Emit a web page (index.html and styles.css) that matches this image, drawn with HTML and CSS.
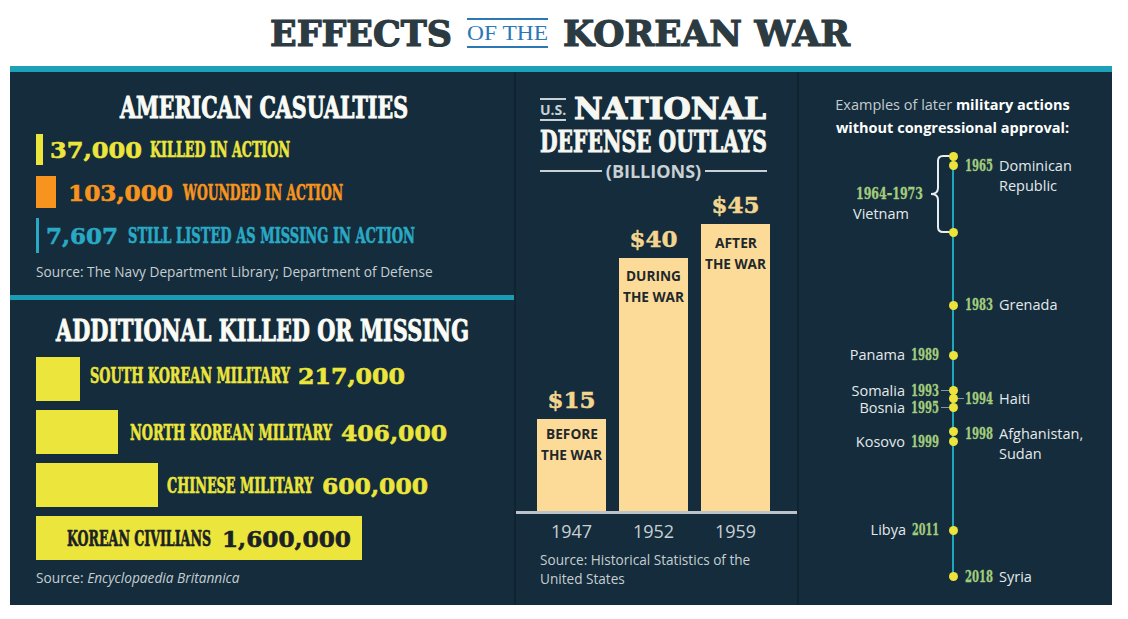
FILE: index.html
```html
<!DOCTYPE html>
<html lang="en">
<head>
<meta charset="utf-8">
<title>Effects of the Korean War</title>
<link rel="stylesheet" href="styles.css">
</head>
<body>
<header class="masthead">
  <h1 class="title">
    <span class="fit" data-w="182"><span>EFFECTS</span></span>
    <span class="fit of-the" data-w="81"><span>OF THE</span></span>
    <span class="fit" data-w="287"><span>KOREAN WAR</span></span>
  </h1>
</header>

<main class="panel">
  <section class="col col-left">
    <div class="casualties">
      <h2 class="sec-title sec-title-1"><span class="fit" data-w="288"><span>AMERICAN CASUALTIES</span></span></h2>
      <div class="stats">
        <div class="stat stat-killed">
          <i class="mark"></i>
          <span class="fit num" data-w="92"><span>37,000</span></span>
          <span class="fit lbl" data-w="140"><span>KILLED IN ACTION</span></span>
        </div>
        <div class="stat stat-wounded">
          <i class="mark"></i>
          <span class="fit num" data-w="105"><span>103,000</span></span>
          <span class="fit lbl" data-w="160"><span>WOUNDED IN ACTION</span></span>
        </div>
        <div class="stat stat-missing">
          <i class="mark"></i>
          <span class="fit num" data-w="72"><span>7,607</span></span>
          <span class="fit lbl" data-w="287"><span>STILL LISTED AS MISSING IN ACTION</span></span>
        </div>
      </div>
      <p class="source source-1">Source: The Navy Department Library; Department of Defense</p>
    </div>

    <div class="additional">
      <h2 class="sec-title sec-title-2"><span class="fit" data-w="413"><span>ADDITIONAL KILLED OR MISSING</span></span></h2>
      <div class="kills">
        <div class="kill-row kill-row-1">
          <i class="kbar kbar-1"></i>
          <span class="fit lbl" data-w="200"><span>SOUTH KOREAN MILITARY</span></span>
          <span class="fit num" data-w="107"><span>217,000</span></span>
        </div>
        <div class="kill-row kill-row-2">
          <i class="kbar kbar-2"></i>
          <span class="fit lbl" data-w="202"><span>NORTH KOREAN MILITARY</span></span>
          <span class="fit num" data-w="106"><span>406,000</span></span>
        </div>
        <div class="kill-row kill-row-3">
          <i class="kbar kbar-3"></i>
          <span class="fit lbl" data-w="146"><span>CHINESE MILITARY</span></span>
          <span class="fit num" data-w="106"><span>600,000</span></span>
        </div>
        <div class="kill-row kill-row-4">
          <div class="kbar kbar-4">
            <span class="fit lbl" data-w="144"><span>KOREAN CIVILIANS</span></span>
            <span class="fit num" data-w="129"><span>1,600,000</span></span>
          </div>
        </div>
      </div>
      <p class="source source-2">Source: <em>Encyclopaedia Britannica</em></p>
    </div>
  </section>

  <section class="col col-mid">
    <div class="outlays-head">
      <div class="mhead-row">
        <span class="us">U.S.</span>
        <span class="fit big-slab" data-w="192"><span>NATIONAL</span></span>
      </div>
      <div class="mhead-2"><span class="fit cond-slab" data-w="227"><span>DEFENSE OUTLAYS</span></span></div>
      <div class="billions">(BILLIONS)</div>
    </div>

    <div class="chart">
      <div class="bar-col">
        <span class="val">$15</span>
        <div class="bar bar-1947">
          <span class="fit" data-w="52"><span>BEFORE</span></span>
          <span class="fit" data-w="61"><span>THE WAR</span></span>
        </div>
      </div>
      <div class="bar-col">
        <span class="val">$40</span>
        <div class="bar bar-1952">
          <span class="fit" data-w="55"><span>DURING</span></span>
          <span class="fit" data-w="61"><span>THE WAR</span></span>
        </div>
      </div>
      <div class="bar-col">
        <span class="val">$45</span>
        <div class="bar bar-1959">
          <span class="fit" data-w="42"><span>AFTER</span></span>
          <span class="fit" data-w="61"><span>THE WAR</span></span>
        </div>
      </div>
    </div>
    <div class="years">
      <span>1947</span><span>1952</span><span>1959</span>
    </div>
    <p class="source source-3">Source: Historical Statistics of the<br>United States</p>
  </section>

  <section class="col col-right">
    <p class="actions-head">Examples of later <b>military actions<br>without congressional approval:</b></p>
    <div class="timeline">
      <i class="tl-line"></i>
      <svg class="brace" width="26" height="80" viewBox="0 0 26 80" aria-hidden="true">
        <path d="M25 2 H15 Q10 2 10 7 V34 Q10 40 3 40 Q10 40 10 46 V73 Q10 78 15 78 H25" fill="none" stroke="#e9edef" stroke-width="2"/>
      </svg>
      <i class="tl-conn conn-somalia"></i>
      <i class="tl-conn conn-bosnia"></i>
      <i class="tl-conn conn-haiti"></i>

      <i class="dot d-1964"></i>
      <i class="dot d-1965"></i>
      <i class="dot d-1973"></i>
      <i class="dot d-1983"></i>
      <i class="dot d-1989"></i>
      <i class="dot d-1993"></i>
      <i class="dot d-1994"></i>
      <i class="dot d-1995"></i>
      <i class="dot d-1998"></i>
      <i class="dot d-1999"></i>
      <i class="dot d-2011"></i>
      <i class="dot d-2018"></i>

      <div class="tl-item tl-r t-1965"><span class="fit yr" data-w="28"><span>1965</span></span><span class="place">Dominican<br>Republic</span></div>
      <div class="tl-item tl-viet"><span class="fit yr yr-viet" data-w="67"><span>1964–1973</span></span><span class="place">Vietnam</span></div>
      <div class="tl-item tl-r t-1983"><span class="fit yr" data-w="28"><span>1983</span></span><span class="place">Grenada</span></div>
      <div class="tl-item tl-l t-1989"><span class="place">Panama</span><span class="fit yr" data-w="28"><span>1989</span></span></div>
      <div class="tl-item tl-l t-1993"><span class="place">Somalia</span><span class="fit yr" data-w="28"><span>1993</span></span></div>
      <div class="tl-item tl-r t-1994"><span class="fit yr" data-w="28"><span>1994</span></span><span class="place">Haiti</span></div>
      <div class="tl-item tl-l t-1995"><span class="place">Bosnia</span><span class="fit yr" data-w="28"><span>1995</span></span></div>
      <div class="tl-item tl-r t-1998"><span class="fit yr" data-w="28"><span>1998</span></span><span class="place">Afghanistan,<br>Sudan</span></div>
      <div class="tl-item tl-l t-1999"><span class="place">Kosovo</span><span class="fit yr" data-w="28"><span>1999</span></span></div>
      <div class="tl-item tl-l t-2011"><span class="place">Libya</span><span class="fit yr" data-w="27"><span>2011</span></span></div>
      <div class="tl-item tl-r t-2018"><span class="fit yr" data-w="28"><span>2018</span></span><span class="place">Syria</span></div>
    </div>
  </section>
</main>
<script src="fit.js"></script>
</body>
</html>
```

FILE: styles.css
```css
* { box-sizing: border-box; }
html, body { margin: 0; padding: 0; background: #ffffff; }
body {
  width: 1128px;
  height: 619px;
  overflow: hidden;
  font-family: "Open Sans", "Noto Sans", sans-serif;
}

/* fit-to-width helper: outer box has target width, inner is scaled horizontally */
.fit { display: inline-block; flex: none; white-space: nowrap; }
.fit > span { display: inline-block; transform-origin: 0 50%; }

/* ---------- masthead ---------- */
.masthead {
  height: 66px;
  display: flex;
  justify-content: center;
  align-items: center;
  padding-right: 8px;
}
.title {
  margin: 0;
  display: flex;
  align-items: center;
  gap: 15px;
  font-family: "DejaVu Serif", serif;
  font-weight: bold;
  font-size: 36px;
  line-height: 1;
  color: #2c3a41;
  -webkit-text-stroke: 1.2px #2c3a41;
}
.of-the {
  font-family: "Liberation Serif", serif;
  font-weight: normal;
  font-size: 21px;
  line-height: 1;
  color: #2b78b5;
  -webkit-text-stroke: 0;
  border-top: 2px solid #2b78b5;
  border-bottom: 2px solid #2b78b5;
  padding: 3px 0 2px;
}

/* ---------- panel ---------- */
.panel {
  margin-left: 10px;
  width: 1102px;
  height: 539px;
  background: #142c3b;
  border-top: 6px solid #1ca2b8;
  display: grid;
  grid-template-columns: 504px 283px 315px;
}
.col-mid, .col-right { border-left: 2px solid #0f2330; }

.sec-title {
  margin: 0;
  text-align: center;
  font-family: "DejaVu Serif Condensed", "DejaVu Serif", serif;
  font-weight: bold;
  line-height: 1;
  color: #fbfbf6;
  -webkit-text-stroke: 0.9px #fbfbf6;
}
.num {
  font-family: "DejaVu Serif", serif;
  font-weight: bold;
  font-size: 23px;
  line-height: 1;
  -webkit-text-stroke: 0.6px currentColor;
}
.lbl {
  font-family: "DejaVu Serif Condensed", "DejaVu Serif", serif;
  font-weight: bold;
  font-size: 22px;
  line-height: 1;
  -webkit-text-stroke: 0.6px currentColor;
}
.source {
  margin: 0;
  font-size: 13.7px;
  line-height: 18px;
  color: #c6ced2;
}

/* ---------- american casualties ---------- */
.casualties { height: 223px; padding-top: 22px; }
.sec-title-1 { font-size: 29px; padding-left: 4px; }
.stats {
  display: flex;
  flex-direction: column;
  gap: 9px;
  margin-top: 9px;
  padding-left: 26px;
}
.stat { display: flex; align-items: center; height: 34px; }
.mark { display: block; flex: none; }
.stat-killed { color: #ece53b; }
.stat-killed .mark { width: 7px; height: 31px; background: #ece53b; margin-right: 7px; }
.stat-killed .num { margin-right: 8px; }
.stat-wounded { color: #f7941d; }
.stat-wounded .mark { width: 20px; height: 32px; background: #f7941d; margin-right: 12px; }
.stat-wounded .num { margin-right: 10px; }
.stat-missing { color: #2aa9c4; }
.stat-missing .mark { width: 3px; height: 35px; background: #2aa9c4; margin-right: 7px; }
.stat-missing .num { margin-right: 10px; }
.source-1 { margin-top: 11px; padding-left: 26px; }

/* ---------- additional killed ---------- */
.additional {
  border-top: 5px solid #1a9db3;
  padding-top: 16px;
  height: 310px;
}
.sec-title-2 { font-size: 30px; }
.kills {
  display: flex;
  flex-direction: column;
  gap: 9px;
  margin-top: 11px;
  padding-left: 26px;
  color: #ece53b;
}
.kill-row { display: flex; align-items: center; height: 44px; }
.kill-row-1 .fit { margin-bottom: 8px; }
.kbar { display: block; flex: none; height: 44px; background: #ece53b; }
.kbar-1 { width: 44px; margin-right: 10px; }
.kbar-2 { width: 82px; margin-right: 12px; }
.kbar-3 { width: 122px; margin-right: 9px; }
.kill-row-1 .lbl { margin-right: 8px; }
.kill-row-2 .lbl, .kill-row-3 .lbl { margin-right: 9px; }
.kbar-4 {
  width: 326px;
  display: flex;
  align-items: center;
  gap: 11px;
  padding-left: 31px;
  color: #1b2226;
}
.source-2 { margin-top: 9px; padding-left: 26px; }

/* ---------- national defense outlays ---------- */
.outlays-head { padding: 23px 0 0 24px; width: 251px; color: #f7f7f2; }
.mhead-row { display: flex; align-items: center; gap: 8px; }
.us {
  font-weight: bold;
  font-size: 14px;
  line-height: 14px;
  color: #c9d1d5;
  border-top: 2px solid #c9d1d5;
  border-bottom: 2px solid #c9d1d5;
  padding: 2.5px 0;
}
.big-slab {
  font-family: "DejaVu Serif", serif;
  font-weight: bold;
  font-size: 29px;
  line-height: 1;
  -webkit-text-stroke: 1px #f7f7f2;
}
.mhead-2 { margin-top: 3px; }
.cond-slab {
  font-family: "DejaVu Serif Condensed", "DejaVu Serif", serif;
  font-weight: bold;
  font-size: 30px;
  line-height: 1;
  -webkit-text-stroke: 0.9px #f7f7f2;
}
.billions {
  margin-top: 3px;
  display: flex;
  align-items: center;
  gap: 4px;
  font-weight: bold;
  font-size: 18px;
  line-height: 22px;
  color: #c9d1d5;
}
.billions::before, .billions::after {
  content: "";
  flex: 1;
  height: 2px;
  background: #c9d1d5;
}

.chart {
  height: 332px;
  border-bottom: 3px solid #b9c3c9;
  display: flex;
  align-items: flex-end;
  gap: 13px;
  padding-left: 21px;
}
.bar-col { display: flex; flex-direction: column; align-items: center; width: 69px; }
.val {
  font-family: "DejaVu Serif", serif;
  font-weight: bold;
  font-size: 23px;
  line-height: 1;
  color: #f3d58f;
  -webkit-text-stroke: 0.5px #f3d58f;
  margin-bottom: 8px;
}
.bar {
  width: 69px;
  background: #fcdb98;
  display: flex;
  flex-direction: column;
  align-items: center;
  font-weight: bold;
  font-size: 15px;
  line-height: 20.5px;
  color: #1f282d;
}
.bar-1947 { height: 92px; padding-top: 4px; }
.bar-1952 { height: 253px; padding-top: 7px; }
.bar-1959 { height: 287px; padding-top: 8px; }

.years {
  display: flex;
  gap: 13px;
  padding-left: 21px;
  margin-top: 6px;
  font-size: 18px;
  line-height: 22px;
  color: #c8d0d5;
}
.years span { width: 69px; text-align: center; }
.source-3 { margin-top: 8px; padding-left: 24px; font-size: 13.6px; line-height: 19px; }

/* ---------- later military actions ---------- */
.actions-head {
  margin: 0;
  height: 78px;
  padding: 21px 6px 0 0;
  text-align: center;
  font-size: 14.5px;
  line-height: 23px;
  color: #c3cbd0;
}
.actions-head b { color: #ffffff; font-weight: 700; }

.timeline { position: relative; height: 455px; }
.tl-line { position: absolute; left: 153px; top: 6px; width: 2px; height: 421px; background: #1ea6bd; }
.brace { position: absolute; left: 129px; top: 4px; }
.tl-conn { position: absolute; height: 1px; background: #8597a1; }
.conn-somalia { left: 142px; top: 240px; width: 8px; }
.conn-bosnia { left: 142px; top: 257px; width: 8px; }
.conn-haiti { left: 158px; top: 248px; width: 7px; }

.dot {
  position: absolute;
  left: 149.5px;
  width: 9px;
  height: 9px;
  border-radius: 50%;
  background: #ece43a;
}
.d-1964 { top: 1.5px; }
.d-1965 { top: 10.5px; }
.d-1973 { top: 77.5px; }
.d-1983 { top: 150.5px; }
.d-1989 { top: 200.5px; }
.d-1993 { top: 235.5px; }
.d-1994 { top: 243.5px; }
.d-1995 { top: 252.5px; }
.d-1998 { top: 276.5px; }
.d-1999 { top: 286.5px; }
.d-2011 { top: 375.5px; }
.d-2018 { top: 421.5px; }

.tl-item {
  position: absolute;
  display: flex;
  align-items: flex-start;
  gap: 6px;
  line-height: 20px;
  white-space: nowrap;
}
.tl-r { left: 166px; }
.tl-l { right: 173px; }
.place { font-size: 14.5px; color: #e4e9eb; }
.yr {
  font-family: "DejaVu Serif Condensed", "DejaVu Serif", serif;
  font-weight: bold;
  font-size: 16px;
  color: #a4cd7e;
  -webkit-text-stroke: 0.3px #a4cd7e;
}
.tl-viet { left: 54px; top: 34px; flex-direction: column; gap: 0; }
.yr-viet { margin-left: 3px; }

.t-1965 { top: 6px; }
.t-1983 { top: 145px; }
.t-1989 { top: 195px; }
.t-1993 { top: 231px; }
.t-1994 { top: 239px; }
.t-1995 { top: 248px; }
.t-1998 { top: 274px; }
.t-1999 { top: 282px; }
.t-2011 { top: 370px; }
.t-2018 { top: 417px; }
```

FILE: fit.js
```js
(function () {
  var items = document.querySelectorAll('.fit');
  for (var i = 0; i < items.length; i++) {
    var el = items[i];
    var inner = el.firstElementChild;
    var target = parseFloat(el.getAttribute('data-w'));
    if (!inner || !target) continue;
    var natural = inner.getBoundingClientRect().width;
    el.style.width = target + 'px';
    if (natural > 0) {
      inner.style.transform = 'scaleX(' + (target / natural).toFixed(4) + ')';
    }
  }
})();
```
